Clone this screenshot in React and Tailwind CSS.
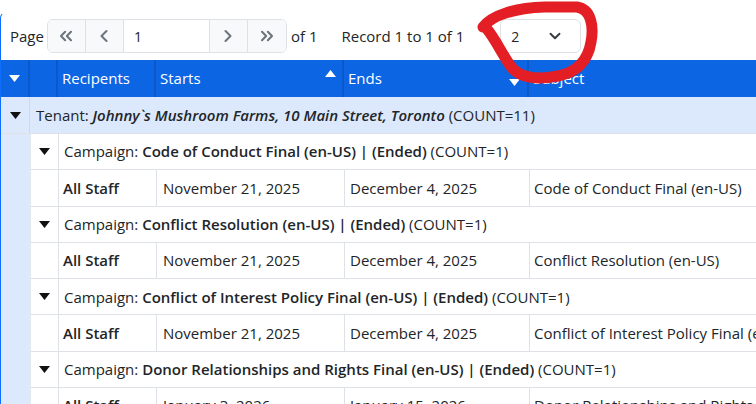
import { ChevronsLeft, ChevronLeft, ChevronRight, ChevronsRight, ChevronDown } from "lucide-react";

const COLS = ["w-[29px]", "w-[28px]", "w-[98px]", "w-[188px]", "w-[185px]", "w-[320px]"];

function Tri({ white }) {
    return (
        <svg width="11" height="7" viewBox="0 0 11 7" className="block">
            <path d="M0 0 L11 0 L5.5 7 Z" fill={white ? "#fff" : "#111"} />
        </svg>
    );
}

function TenantRow() {
    return (
        <div className="flex h-[36px] bg-[#dce8fb] border-b border-[#dee2e6] items-center">
            <div className="w-[29px] h-full flex items-center justify-center border-r border-[#cfd8e6]">
                <Tri />
            </div>
            <div className="pl-[6px] whitespace-nowrap text-[#212529]">
                Tenant: <span className="font-semibold italic">Johnny`s Mushroom Farms, 10 Main Street, Toronto</span> (COUNT=11)
            </div>
        </div>
    );
}

function CampaignRow({ name }) {
    return (
        <div className="flex h-[36.3px]">
            <div className="w-[29px] shrink-0 bg-[#dce8fb]" />
            <div className="flex flex-1 items-center border-b border-[#dee2e6] border-l border-l-[#e3e6ea]">
                <div className="w-[28px] h-full flex items-center justify-center border-r border-[#dee2e6]">
                    <Tri />
                </div>
                <div className="pl-[5px] whitespace-nowrap text-[#212529]">
                    Campaign: <span className="font-semibold">{name} | (Ended)</span> (COUNT=1)
                </div>
            </div>
        </div>
    );
}

function DataRow({ starts, ends, subject }) {
    return (
        <div className="flex h-[36.3px]">
            <div className="w-[29px] shrink-0 bg-[#dce8fb]" />
            <div className="flex flex-1 border-b border-[#dee2e6] border-l border-l-[#e3e6ea] whitespace-nowrap text-[#212529]">
                <div className="w-[28px] shrink-0 border-r border-[#dee2e6]" />
                <div className="w-[98px] shrink-0 border-r border-[#dee2e6] flex items-center pl-[4px] font-semibold">All Staff</div>
                <div className="w-[188px] shrink-0 border-r border-[#dee2e6] flex items-center pl-[6px]">{starts}</div>
                <div className="w-[185px] shrink-0 border-r border-[#dee2e6] flex items-center pl-[5px]">{ends}</div>
                <div className="w-[320px] shrink-0 flex items-center pl-[4px]">{subject}</div>
            </div>
        </div>
    );
}

function PagerButton({ children, last }) {
    return (
        <div className={`w-[38px] h-full flex items-center justify-center bg-[#f8f9fa] text-[#6c757d] ${last ? "" : "border-r border-[#dee2e6]"}`}>
            {children}
        </div>
    );
}

export default function App() {
    const campaigns = [
        ["Code of Conduct Final (en-US)", "November 21, 2025", "December 4, 2025"],
        ["Conflict Resolution (en-US)", "November 21, 2025", "December 4, 2025"],
        ["Conflict of Interest Policy Final (en-US)", "November 21, 2025", "December 4, 2025"],
        ["Donor Relationships and Rights Final (en-US)", "January 3, 2026", "January 15, 2026"],
    ];

    return (
        <div className="relative w-[756px] h-[404px] overflow-hidden bg-white text-[15px] font-['Open_Sans',sans-serif]">
            <div className="mt-[12px] border-l border-t border-[#0d6efd] rounded-tl-[6px] border-t-transparent">
                {/* toolbar */}
                <div className="flex items-center h-[34px] mt-[6px] pl-[9px] text-[#212529] whitespace-nowrap">
                    <span>Page</span>
                    <div className="ml-[3px] flex h-[34px] border border-[#dee2e6] rounded-[6px] overflow-hidden">
                        <PagerButton><ChevronsLeft size={20} strokeWidth={2.5} /></PagerButton>
                        <PagerButton><ChevronLeft size={20} strokeWidth={2.5} /></PagerButton>
                        <div className="w-[86px] bg-white border-r border-[#dee2e6] flex items-center pl-[10px] text-[14px]">1</div>
                        <PagerButton><ChevronRight size={20} strokeWidth={2.5} /></PagerButton>
                        <PagerButton last><ChevronsRight size={20} strokeWidth={2.5} /></PagerButton>
                    </div>
                    <span className="ml-[4px]">of 1</span>
                    <span className="ml-[24px]">Record 1 to 1 of 1</span>
                    <div className="ml-[36px] w-[81px] h-[34px] border border-[#dee2e6] rounded-[6px] flex items-center pl-[10px] text-[14px]">
                        <span>2</span>
                        <ChevronDown size={18} strokeWidth={2.5} className="ml-[27px] text-[#343a40]" />
                    </div>
                </div>

                {/* header */}
                <div className="mt-[7px] flex h-[37px] bg-[#0c66e4] text-white whitespace-nowrap">
                    <div className={`${COLS[0]} shrink-0 border-r-2 border-[#0a58ca] flex items-center justify-center`}>
                        <Tri white />
                    </div>
                    <div className={`${COLS[1]} shrink-0 border-r-2 border-[#0a58ca]`} />
                    <div className={`${COLS[2]} shrink-0 border-r-2 border-[#0a58ca] flex items-center pl-[4px]`}>Recipents</div>
                    <div className={`${COLS[3]} shrink-0 border-r-2 border-[#0a58ca] flex items-center pl-[4px] relative`}>
                        Starts
                        <svg width="11" height="7" viewBox="0 0 11 7" className="absolute right-[6px] top-[10px]">
                            <path d="M0 7 L11 7 L5.5 0 Z" fill="#fff" />
                        </svg>
                    </div>
                    <div className={`${COLS[4]} shrink-0 border-r-2 border-[#0a58ca] flex items-center pl-[4px] relative`}>
                        Ends
                        <svg width="11" height="7" viewBox="0 0 11 7" className="absolute right-[7px] top-[19px]">
                            <path d="M0 0 L11 0 L5.5 7 Z" fill="#fff" />
                        </svg>
                    </div>
                    <div className={`${COLS[5]} shrink-0 flex items-center pl-[4px]`}>Subject</div>
                </div>
                <div className="h-px bg-[#dce8fb]" />

                <TenantRow />
                {campaigns.map(([name, s, e]) => (
                    <div key={name}>
                        <CampaignRow name={name} />
                        <DataRow starts={s} ends={e} subject={name} />
                    </div>
                ))}
            </div>

            {/* red annotation */}
            <svg className="absolute left-0 top-0 z-10 pointer-events-none" width="756" height="404" viewBox="0 0 756 404">
                <path
                    d="M483 27 C 492 15, 515 8, 545 7 L 577 7 C 591 9, 594 26, 591 42 C 588 60, 578 72, 558 76 C 538 80, 521 78, 512 68 C 503 56, 496 40, 487 29"
                    fill="none"
                    stroke="#e31e24"
                    strokeWidth="11"
                    strokeLinecap="round"
                    strokeLinejoin="round"
                />
            </svg>
        </div>
    );
}
